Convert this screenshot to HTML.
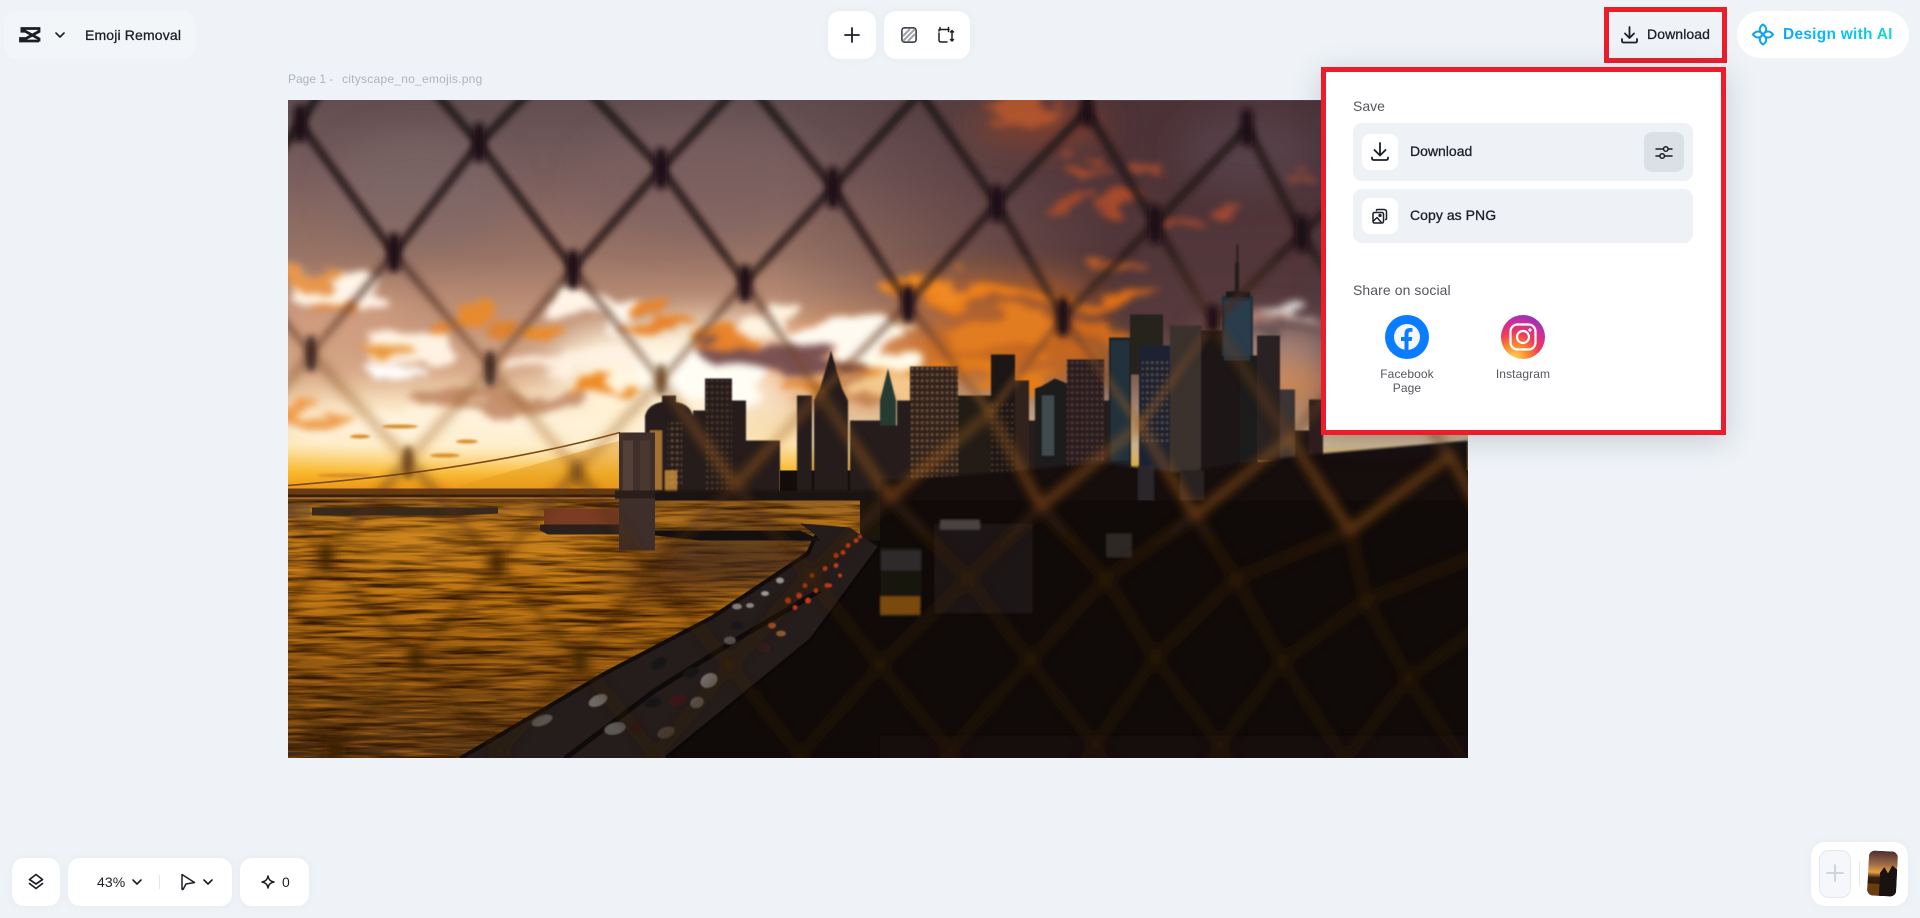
<!DOCTYPE html>
<html><head><meta charset="utf-8"><title>Emoji Removal</title>
<style>
html,body{margin:0;padding:0;width:1920px;height:918px;overflow:hidden;background:#eff3f7;font-family:"Liberation Sans",sans-serif;color:#1c1f26}
.a{position:absolute}
.card{position:absolute;background:#fff;border-radius:12px;box-shadow:0 0 8px rgba(120,135,150,.08)}
.t{position:absolute;white-space:nowrap;font-size:14px;line-height:18px}
.m{-webkit-text-stroke:.3px currentColor}
svg{display:block;overflow:visible}
.ic{position:absolute;fill:none;stroke:#1c1f26;stroke-width:1.6;stroke-linecap:round;stroke-linejoin:round}
</style></head><body>

<svg class="a" style="left:288px;top:99.500px;overflow:hidden" width="1180" height="658.500" viewBox="288 99.500 1180 658.500">
<defs>
<linearGradient id="sky" gradientUnits="userSpaceOnUse" x1="0" y1="100" x2="0" y2="495">
<stop offset="0" stop-color="#614e50"/><stop offset=".2" stop-color="#7b5f5e"/><stop offset=".4" stop-color="#9b7566"/><stop offset=".52" stop-color="#bd8f76"/><stop offset=".68" stop-color="#d6a888"/><stop offset=".78" stop-color="#f3d3aa"/><stop offset=".87" stop-color="#fde6b4"/><stop offset=".94" stop-color="#f9b92e"/><stop offset="1" stop-color="#e88c10"/>
</linearGradient>
<linearGradient id="dk" gradientUnits="userSpaceOnUse" x1="780" y1="0" x2="1110" y2="0">
<stop offset="0" stop-color="#46292e" stop-opacity="0"/><stop offset="1" stop-color="#4a3035" stop-opacity=".9"/>
</linearGradient>
<linearGradient id="dkv" gradientUnits="userSpaceOnUse" x1="0" y1="100" x2="0" y2="470">
<stop offset="0" stop-color="#fff"/><stop offset=".6" stop-color="#fff"/><stop offset="1" stop-color="#fff" stop-opacity=".15"/>
</linearGradient>
<mask id="dkm"><rect x="288" y="100" width="1180" height="400" fill="url(#dkv)"/></mask>
<linearGradient id="wat" gradientUnits="userSpaceOnUse" x1="0" y1="498" x2="0" y2="758">
<stop offset="0" stop-color="#8a5c24"/><stop offset=".1" stop-color="#c07c1c"/><stop offset=".4" stop-color="#b87212"/><stop offset=".68" stop-color="#8c5410"/><stop offset="1" stop-color="#4c2e14"/>
</linearGradient>
<linearGradient id="fgt" gradientUnits="userSpaceOnUse" x1="0" y1="100" x2="0" y2="400">
<stop offset="0" stop-color="#20161a" stop-opacity=".86"/><stop offset=".5" stop-color="#2a1c1c" stop-opacity=".8"/><stop offset=".75" stop-color="#4e2e22" stop-opacity=".62"/><stop offset="1" stop-color="#7a4a26" stop-opacity=".45"/>
</linearGradient>
<linearGradient id="fgm" gradientUnits="userSpaceOnUse" x1="0" y1="250" x2="0" y2="500">
<stop offset="0" stop-color="#3a2420" stop-opacity=".72"/><stop offset=".4" stop-color="#6e4228" stop-opacity=".5"/><stop offset=".75" stop-color="#b06a20" stop-opacity=".45"/><stop offset="1" stop-color="#a85c10" stop-opacity=".55"/>
</linearGradient>
<linearGradient id="fgl" gradientUnits="userSpaceOnUse" x1="0" y1="440" x2="0" y2="760">
<stop offset="0" stop-color="#6a3c14" stop-opacity=".55"/><stop offset=".4" stop-color="#42220c" stop-opacity=".45"/><stop offset="1" stop-color="#34200f" stop-opacity=".38"/>
</linearGradient>
<filter id="b1" x="-20%" y="-20%" width="140%" height="140%"><feGaussianBlur stdDeviation="1"/></filter>
<filter id="bs" filterUnits="userSpaceOnUse" x="200" y="0" width="1400" height="900"><feGaussianBlur stdDeviation=".7"/></filter>
<filter id="b2" filterUnits="userSpaceOnUse" x="200" y="0" width="1400" height="900"><feGaussianBlur stdDeviation="2.600"/></filter>
<filter id="b3" filterUnits="userSpaceOnUse" x="200" y="0" width="1400" height="900"><feGaussianBlur stdDeviation="3.500"/></filter>
<filter id="b5" filterUnits="userSpaceOnUse" x="200" y="0" width="1400" height="900"><feGaussianBlur stdDeviation="5"/></filter>
<filter id="b16" filterUnits="userSpaceOnUse" x="200" y="0" width="1400" height="900"><feGaussianBlur stdDeviation="16"/></filter>
<filter id="cl" filterUnits="userSpaceOnUse" x="200" y="0" width="1400" height="900" color-interpolation-filters="sRGB">
<feTurbulence type="fractalNoise" baseFrequency=".014 .035" numOctaves="4" seed="11" result="n"/>
<feDisplacementMap in="SourceGraphic" in2="n" scale="55" xChannelSelector="R" yChannelSelector="G"/>
<feGaussianBlur stdDeviation="3.600"/>
</filter>
<filter id="wd" filterUnits="userSpaceOnUse" x="288" y="495" width="600" height="265" color-interpolation-filters="sRGB">
<feTurbulence type="fractalNoise" baseFrequency=".014 .22" numOctaves="3" seed="7"/>
<feColorMatrix values="0 0 0 0 .2  0 0 0 0 .09  0 0 0 0 0  2.600 0 0 0 -1"/>
</filter>
<filter id="wl" filterUnits="userSpaceOnUse" x="288" y="495" width="600" height="265" color-interpolation-filters="sRGB">
<feTurbulence type="fractalNoise" baseFrequency=".018 .28" numOctaves="3" seed="21"/>
<feColorMatrix values="0 0 0 0 .95  0 0 0 0 .58  0 0 0 0 .12  3 0 0 0 -1.400"/>
</filter>
<pattern id="win" width="5" height="6" patternUnits="userSpaceOnUse"><rect x="1" y="1" width="2.400" height="2.400" fill="#d9a468" opacity=".45"/></pattern>
<clipPath id="wc"><path d="M288,498H860V540L808,553L712,617L605,673L460,758H288Z"/></clipPath>
</defs>

<rect x="288" y="99" width="1180" height="401" fill="url(#sky)"/>
<rect x="288" y="99" width="1180" height="401" fill="url(#dk)" mask="url(#dkm)"/>
<g filter="url(#b16)">
<ellipse cx="420" cy="190" rx="90" ry="60" fill="#7c6a6a" opacity=".5"/>
<ellipse cx="700" cy="180" rx="120" ry="60" fill="#7d6060" opacity=".5"/>
<ellipse cx="1250" cy="150" rx="70" ry="40" fill="#5a4a52" opacity=".6"/>
<ellipse cx="1040" cy="125" rx="70" ry="20" fill="#92452a" opacity=".7"/>
<ellipse cx="700" cy="365" rx="150" ry="45" fill="#fff6e0"/>
<ellipse cx="500" cy="425" rx="230" ry="28" fill="#fff4dc" opacity=".9"/>
<ellipse cx="860" cy="360" rx="110" ry="40" fill="#e89048" opacity=".7"/>
<ellipse cx="1010" cy="350" rx="110" ry="32" fill="#d06a18" opacity=".9"/>
<ellipse cx="1000" cy="295" rx="100" ry="18" fill="#c8641c" opacity=".7"/>
<ellipse cx="1270" cy="345" rx="70" ry="24" fill="#a88880" opacity=".85"/>
<ellipse cx="1280" cy="385" rx="60" ry="22" fill="#d28a55" opacity=".95"/>
<ellipse cx="340" cy="320" rx="70" ry="28" fill="#d8a184" opacity=".6"/>
</g>
<g filter="url(#cl)">
<ellipse cx="330" cy="285" rx="50" ry="12" fill="#fff4e8" transform="rotate(14 330 285)"/>
<ellipse cx="300" cy="275" rx="40" ry="6" fill="#e8964a"/>
<ellipse cx="405" cy="345" rx="44" ry="20" fill="#fff2e2"/>
<ellipse cx="400" cy="372" rx="28" ry="6" fill="#fff"/>
<ellipse cx="385" cy="352" rx="24" ry="7" fill="#e99a3e"/>
<ellipse cx="585" cy="305" rx="30" ry="15" fill="#fff4e6" transform="rotate(24 585 305)"/>
<ellipse cx="622" cy="322" rx="26" ry="10" fill="#fff8ee"/>
<ellipse cx="772" cy="316" rx="24" ry="10" fill="#fff3e0"/>
<ellipse cx="835" cy="335" rx="54" ry="18" fill="#fffaf0"/>
<ellipse cx="600" cy="362" rx="100" ry="11" fill="#fff2e2" opacity=".9"/>
<ellipse cx="700" cy="375" rx="60" ry="28" fill="#fffdf4"/>
<ellipse cx="420" cy="424" rx="140" ry="9" fill="#fff2dc"/>
<ellipse cx="320" cy="412" rx="44" ry="8" fill="#ee9c4c"/>
<ellipse cx="500" cy="398" rx="100" ry="11" fill="#bd8260" opacity=".85"/>
<ellipse cx="450" cy="330" rx="12" ry="7" fill="#e9852c"/>
<ellipse cx="337" cy="302" rx="18" ry="6" fill="#e4812a"/>
<ellipse cx="475" cy="320" rx="20" ry="7" fill="#e78a2f"/>
<ellipse cx="510" cy="330" rx="14" ry="8" fill="#dd8230"/>
<ellipse cx="550" cy="335" rx="24" ry="7" fill="#ec8a24"/>
<ellipse cx="600" cy="388" rx="34" ry="5" fill="#ec8a24"/>
<ellipse cx="660" cy="320" rx="40" ry="7" fill="#e8832a"/>
<ellipse cx="725" cy="338" rx="28" ry="14" fill="#e8832a" transform="rotate(-20 725 338)"/>
<ellipse cx="775" cy="358" rx="75" ry="14" fill="#7b5152" transform="rotate(6 775 358)"/>
<ellipse cx="862" cy="365" rx="24" ry="8" fill="#5e3a36"/>
<ellipse cx="868" cy="385" rx="24" ry="20" fill="#c58452"/>
<ellipse cx="820" cy="395" rx="30" ry="7" fill="#dd7f24"/>
<ellipse cx="645" cy="412" rx="44" ry="12" fill="#fff0d0"/>
<ellipse cx="985" cy="292" rx="84" ry="9" fill="#ec7f18"/>
<ellipse cx="925" cy="288" rx="44" ry="7" fill="#f08a24"/>
<ellipse cx="1095" cy="298" rx="70" ry="7" fill="#dd6e18"/>
<ellipse cx="1000" cy="333" rx="56" ry="15" fill="#e27c20"/>
<ellipse cx="1100" cy="332" rx="42" ry="11" fill="#d06a1c"/>
<ellipse cx="960" cy="370" rx="100" ry="12" fill="#e57d18"/>
<g opacity=".8">
<ellipse cx="1130" cy="268" rx="26" ry="5" fill="#de6b24"/>
<ellipse cx="1102" cy="260" rx="11" ry="4" fill="#e06a20"/>
<ellipse cx="1181" cy="221" rx="22" ry="6" fill="#c8502a"/>
<ellipse cx="1090" cy="170" rx="24" ry="5" fill="#cc5528"/>
<ellipse cx="1150" cy="165" rx="26" ry="6" fill="#b8502e" transform="rotate(-14 1150 165)"/>
<ellipse cx="1075" cy="197" rx="24" ry="6" fill="#bb4e28"/>
<ellipse cx="1120" cy="205" rx="18" ry="7" fill="#bd5028"/>
<ellipse cx="1225" cy="207" rx="12" ry="5" fill="#bb5030"/>
<ellipse cx="1295" cy="178" rx="22" ry="4" fill="#a85038"/>
<ellipse cx="1020" cy="108" rx="44" ry="8" fill="#c05a2c"/>
</g>
<ellipse cx="1265" cy="320" rx="55" ry="8" fill="#a67a70"/>
<ellipse cx="1290" cy="313" rx="22" ry="3" fill="#d8d2d2"/>
<ellipse cx="1285" cy="328" rx="38" ry="6" fill="#6a5656"/>
<ellipse cx="895" cy="352" rx="28" ry="15" fill="#fffbe8"/>
<ellipse cx="892" cy="385" rx="38" ry="12" fill="#f4c88c"/>
</g>
<g fill="#d98e2c" filter="url(#b1)">
<ellipse cx="360" cy="436" rx="10" ry="2"/><ellipse cx="400" cy="426" rx="18" ry="2"/><ellipse cx="467" cy="441" rx="11" ry="2"/><ellipse cx="445" cy="455" rx="15" ry="2"/><ellipse cx="345" cy="475" rx="28" ry="2"/>
</g>

<!-- base under skyline -->
<rect x="780" y="470" width="700" height="300" fill="#120c0a"/>

<!-- skyline -->
<g filter="url(#bs)">
<g fill="#251b1a">
<path d="M645,415q4,-14 24,-14t24,14V500H645Z"/><rect x="662" y="395" width="14" height="10"/>
<rect x="705" y="378" width="27" height="122"/><rect x="693" y="410" width="12" height="90"/><rect x="732" y="400" width="14" height="100"/>
<path d="M746,440H780V500H746Z"/>
<path d="M797,395h15V500H797Z"/><path d="M814,400l6,-12 6,-20 5,-18 5,18 6,20 6,12V500H814Z"/>
<path d="M850,420h30V500H850Z"/>
<path d="M880,400l8,-32 8,32V500H880Z" fill="#263a32"/>
<path d="M880,425h17V500H880Z"/>
<rect x="910" y="366" width="48" height="130" fill="#30241f"/>
<rect x="897" y="400" width="14" height="96"/>
<rect x="958" y="395" width="33" height="100" fill="#241a18"/>
<rect x="991" y="354" width="24" height="140" fill="#1c1616"/>
<rect x="1015" y="380" width="14" height="100" fill="#33201f"/>
<rect x="1029" y="420" width="8" height="60"/>
<path d="M1035,388l6,-2 14,-8 12,5V480H1035Z" fill="#1a1a1e"/>
<rect x="1067" y="359" width="37" height="120" fill="#2b1f21"/>
<rect x="1104" y="400" width="10" height="80"/>
<rect x="1109" y="337" width="22" height="130" fill="#1c2128"/>
<rect x="1130" y="314" width="33" height="60" fill="#26201f"/>
<rect x="1139" y="345" width="31" height="150" fill="#1c2430"/>
<rect x="1170" y="325" width="32" height="150" fill="#3a302f"/>
<rect x="1201" y="330" width="40" height="150" fill="#1e1717"/>
<rect x="1222" y="295" width="31" height="60" fill="#22303c"/>
<rect x="1240" y="355" width="18" height="120" fill="#1b1a1c"/>
<rect x="1236.500" y="244" width="1.800" height="52" fill="#2a1f20"/><rect x="1235" y="262" width="4" height="32" fill="#221a1a"/>
<rect x="1226" y="291" width="24" height="6" fill="#1a1414"/>
<rect x="1257" y="335" width="23" height="125" fill="#2a2022"/>
<rect x="1280" y="389" width="15" height="85" fill="#3c3434"/>
<rect x="1295" y="430" width="14" height="40" fill="#1d1616"/>
<rect x="1309" y="399" width="14" height="70" fill="#2e1e1c"/>
</g>
<rect x="910" y="366" width="48" height="125" fill="url(#win)" opacity=".8"/>
<rect x="1067" y="359" width="37" height="110" fill="url(#win)" opacity=".45"/>
<rect x="1142" y="360" width="26" height="85" fill="url(#win)" opacity=".7"/>
<rect x="991" y="400" width="24" height="85" fill="url(#win)" opacity=".45"/>
<rect x="705" y="380" width="27" height="110" fill="url(#win)" opacity=".45"/>
<rect x="1224" y="300" width="26" height="60" fill="#2d4454" opacity=".7"/>
<rect x="1111" y="340" width="18" height="120" fill="#33505f" opacity=".4"/>
<rect x="1042" y="395" width="12" height="60" fill="#8aa0a8" opacity=".35"/>
<rect x="650" y="430" width="12" height="60" fill="#e8a040" opacity=".65"/>
<rect x="668" y="422" width="14" height="62" fill="url(#win)" opacity=".8"/>
<rect x="665" y="470" width="12" height="30" fill="#e6a240" opacity=".7"/>
</g>

<!-- middle + lower city -->
<g filter="url(#b1)">
<rect x="655" y="490" width="815" height="50" fill="#1a1211"/>
<path d="M880,480L1000,472 1100,462 1180,472 1300,455 1468,440V560H880Z" fill="#161010"/>
<rect x="1180" y="470" width="24" height="30" fill="#2b2220"/>
<rect x="1138" y="465" width="16" height="70" fill="#2f2a2c" opacity=".9"/>
</g>

<!-- water -->
<path d="M288,498H860V540L808,553L712,617L605,673L460,758H288Z" fill="url(#wat)"/>
<g clip-path="url(#wc)">
<rect x="288" y="495" width="600" height="265" filter="url(#wd)"/>
<rect x="288" y="520" width="600" height="235" filter="url(#wl)" opacity=".4"/>
<ellipse cx="740" cy="555" rx="90" ry="35" fill="#43291f" opacity=".75" filter="url(#b16)"/>
<ellipse cx="660" cy="580" rx="55" ry="26" fill="#3f2418" opacity=".45" filter="url(#b16)"/>
<ellipse cx="460" cy="540" rx="130" ry="18" fill="#d88e24" opacity=".45" filter="url(#b16)"/>
</g>

<!-- shoreline, road -->
<path d="M460,758L605,673 712,617 808,553 816,535 800,523 850,527 880,548 812,640 667,758Z" fill="#241d1b"/>
<path d="M460,758L605,673 712,617 808,553 816,535" fill="none" stroke="#120d0c" stroke-width="4"/>
<path d="M565,758L655,690 735,640 820,590" fill="none" stroke="#0f0b0a" stroke-width="5"/>
<path d="M667,758L812,640 880,548" fill="none" stroke="#0c0807" stroke-width="6"/>
<path d="M655,530H800L822,540 700,540 655,535Z" fill="#151010"/>

<!-- dark lower-right -->
<path d="M667,758L812,640 880,548 880,500H1468V758Z" fill="#100b09"/>
<g filter="url(#b1)">
<rect x="934" y="523" width="99" height="90" fill="#1f1917"/>
<rect x="940" y="519" width="40" height="10" fill="#4a4240"/>
<rect x="880" y="547" width="42" height="70" fill="#171311"/>
<rect x="881" y="550" width="40" height="20" fill="#2e2b29"/>
<rect x="880" y="596" width="40" height="18" fill="#7a4a10"/>
<rect x="1106" y="533" width="26" height="24" fill="#3f3b39" opacity=".6"/>
<path d="M880,735H1468V758H880Z" fill="#160d0b"/>
</g>

<!-- bridge -->
<path d="M288,485Q480,470 620,432" fill="none" stroke="#7a4a14" stroke-width="1.600"/>
<path d="M460,485L620,440V490H460Z" fill="#e39a1c" opacity=".5"/>
<rect x="288" y="488" width="335" height="6" fill="#6b3c14"/>
<rect x="288" y="494" width="335" height="3" fill="#33200f"/>
<rect x="288" y="498" width="560" height="2" fill="#6c4420"/>
<path d="M312,507h186v6l-40,2H312Z" fill="#39291b"/><rect x="288" y="503" width="22" height="14" fill="#79582e" opacity=".6"/>
<rect x="544" y="508" width="75" height="16" fill="#7a3c22"/>
<path d="M540,524H622V534H548L540,530Z" fill="#2a201c"/>
<rect x="619" y="432" width="36" height="118" fill="#3e2f2a"/>
<rect x="623" y="440" width="10" height="52" fill="#544038"/><rect x="640" y="440" width="10" height="52" fill="#4a3830"/>
<rect x="615" y="490" width="44" height="8" fill="#2a1e1a"/>
<rect x="655" y="492" width="225" height="8" fill="#1a1312"/>

<!-- cars -->
<g filter="url(#bs)">
<ellipse cx="659" cy="663" rx="8" ry="5" fill="#141214" transform="rotate(-25 659 663)"/>
<ellipse cx="598" cy="700" rx="10" ry="5.500" fill="#706a66" transform="rotate(-25 598 700)"/>
<ellipse cx="542" cy="720" rx="11" ry="5" fill="#5c5450" transform="rotate(-20 542 720)"/>
<ellipse cx="653" cy="702" rx="9" ry="5" fill="#191417" transform="rotate(-14 653 702)"/>
<ellipse cx="678" cy="700" rx="9" ry="5.500" fill="#3a1416" transform="rotate(-14 678 700)"/>
<ellipse cx="697" cy="702" rx="7" ry="5.500" fill="#5e5652" transform="rotate(-25 697 702)"/>
<ellipse cx="691" cy="672" rx="8" ry="5" fill="#141215" transform="rotate(-20 691 672)"/>
<ellipse cx="709" cy="680" rx="9" ry="7" fill="#726e6c" transform="rotate(-30 709 680)"/>
<ellipse cx="615" cy="728" rx="11" ry="6" fill="#5c5856" transform="rotate(-14 615 728)"/>
<ellipse cx="636" cy="728" rx="7" ry="5.500" fill="#2c1416" transform="rotate(-20 636 728)"/>
<ellipse cx="666" cy="732" rx="9" ry="5.500" fill="#4c3e38" transform="rotate(-20 666 732)"/>
<ellipse cx="726" cy="663" rx="6" ry="4" fill="#2c1c18"/>
<ellipse cx="764" cy="647" rx="7" ry="5" fill="#301e1a"/>
<ellipse cx="737" cy="625" rx="6" ry="4" fill="#18151a"/>
<ellipse cx="737" cy="606" rx="5" ry="3" fill="#a8a4a0" opacity=".7"/>
<ellipse cx="781" cy="633" rx="5" ry="3" fill="#8a5a30"/>
<ellipse cx="772" cy="625" rx="4" ry="3" fill="#b05030"/>
<ellipse cx="730" cy="640" rx="6" ry="4" fill="#706a66" opacity=".7"/>
<ellipse cx="780" cy="580" rx="4" ry="3" fill="#c8c4c0" opacity=".7"/>
<ellipse cx="765" cy="593" rx="4" ry="2.500" fill="#d0ccc8" opacity=".7"/>
<ellipse cx="750" cy="605" rx="4" ry="2.500" fill="#d0ccc8" opacity=".6"/>
<g fill="#c83c1c">
<circle cx="795" cy="607" r="2.500"/><circle cx="788" cy="600" r="3"/><circle cx="799" cy="595" r="3"/><circle cx="808" cy="600" r="3"/><circle cx="816" cy="590" r="2.500"/><circle cx="805" cy="585" r="2.500"/><circle cx="827" cy="585" r="2.500"/><circle cx="812" cy="575" r="2.500"/><circle cx="825" cy="568" r="2.500"/><circle cx="836" cy="565" r="2.500"/><circle cx="830" cy="585" r="2"/><circle cx="840" cy="575" r="2"/>
<circle cx="836" cy="555" r="2.500"/><circle cx="843" cy="552" r="2.500"/><circle cx="848" cy="545" r="2.500"/><circle cx="856" cy="540" r="2.500"/><circle cx="860" cy="536" r="2"/>
</g>
</g>

<!-- fence -->
<g fill="none" stroke="url(#fgt)" stroke-width="9" stroke-linejoin="round" filter="url(#b2)">
<path d="M300,123L330,75M479,143L425,80 M479,143L560,60L661,168L745,78L833,187L920,92L997,203L1087,110L1155,223L1247,127L1302,233L1400,140"/>
<path d="M218,240L300,123L394,253L479,143L573,268L661,168L745,282L833,187L908,303L997,203L1063,317L1155,223L1213,322L1302,233L1370,345L1470,262"/>
</g>
<g fill="none" stroke="url(#fgm)" stroke-width="8" stroke-linejoin="round" filter="url(#b3)">
<path d="M218,240L311,353L394,253L490,367L573,268L661,380L745,282L820,393L908,303L990,412L1063,317L1140,425L1213,322"/>
</g>
<g fill="none" stroke="url(#fgl)" stroke-width="9" stroke-linejoin="round" filter="url(#b5)">
<path d="M1213,322L1290,438L1370,345L1450,455"/>
<path d="M237,445L311,353L408,460L490,367L577,470L661,380L735,485L820,393L890,497L990,412L1041,506L1140,425L1195,515L1290,438L1350,530L1450,455L1500,545" stroke="url(#fgm)"/>
<path d="M237,445L326,557L408,460L497,563L577,470L650,570L735,485L810,575L890,497L968,578L1041,506L1106,578L1195,515L1236,578L1350,530L1366,600L1500,545"/>
<path d="M250,650L326,557L416,657L497,563L580,660L650,570L730,665L810,575L880,665L968,578L1030,660L1106,578L1155,657L1236,578L1282,661L1366,600L1408,678L1490,620"/>
<path d="M250,650L335,750L416,657L500,750L580,660L655,755L730,665L800,755L880,665L950,750L1030,660L1095,745L1155,657L1220,745L1282,661L1345,760L1408,678L1470,770"/>
<path d="M255,850L335,750L415,850L500,750L580,850L655,755L730,850L800,755L880,850L950,750L1020,850L1095,745L1160,850L1220,745L1280,850L1345,760L1410,850L1470,770"/>
</g>
<g fill="none" stroke-linecap="round" filter="url(#b3)">
<path stroke="#1a1012" stroke-width="12" d="M479,128v28M661,153v30M833,172v30M997,190v26M1087,98v22M1155,210v28M1247,114v26M1302,220v26M300,110v26M394,238v28M573,255v28M745,270v26M908,290v26M1063,302v28M1213,310v16"/>
<path stroke="#2a1a14" stroke-width="10" d="M311,340v26M490,355v26" opacity=".85"/>
<path stroke="#5a3214" stroke-width="9" d="M661,368v22M408,450v24" opacity=".8"/>
</g>
<g fill="none" stroke-linecap="round" filter="url(#b5)">
<path stroke="#3c1e08" stroke-width="11" d="M326,545v24M497,552v22M416,648v20M580,650v20M335,740v16" opacity=".8"/>
<path stroke="#4a2814" stroke-width="9" d="M577,462v20" opacity=".6"/>
</g>
</svg>

<!-- left header -->
<div class="a" style="left:4px;top:11px;width:191px;height:48px;background:#f3f6f9;border-radius:12px"></div>
<svg class="a" style="left:19px;top:26px" width="22" height="18" viewBox="0 0 22 18"><path d="M1.500,2.500H20V5.500L7,12.500H1.500V15H20M1.500,5.200H6L20,12.800V15.500" fill="none" stroke="#1c1f26" stroke-width="2.800"/></svg>
<svg class="ic" style="left:54px;top:30px" width="12" height="10" viewBox="0 0 12 10"><path d="M2,3l4,4 4,-4"/></svg>
<div class="t m" style="left:85px;top:26px;font-size:14px;letter-spacing:.15px">Emoji Removal</div>
<div class="t" style="left:288px;top:70px;font-size:12px;color:#aeb4bd">Page 1 -</div>
<div class="t" style="left:342px;top:70px;font-size:12px;color:#aeb4bd;letter-spacing:.25px">cityscape_no_emojis.png</div>

<!-- center toolbar -->
<div class="card" style="left:828px;top:11px;width:48px;height:48px"></div>
<svg class="ic" style="left:844px;top:27px;stroke-width:1.800" width="16" height="16" viewBox="0 0 16 16"><path d="M8,1V15M1,8H15"/></svg>
<div class="card" style="left:884px;top:11px;width:86px;height:48px"></div>
<svg class="a" style="left:901px;top:27px" width="16" height="16" viewBox="0 0 16 16"><rect x=".9" y=".9" width="14.200" height="14.200" rx="2.500" fill="#fff" stroke="#2c2f36" stroke-width="1.500"/><path d="M2,9L9,2M2,14L14,2M7,14L14,7" stroke="#9ea2a9" stroke-width="2"/></svg>
<svg class="ic" style="left:938px;top:27px;stroke-width:1.500" width="17" height="16" viewBox="0 0 17 16"><path d="M1,6V13q0,2 2,2H9M1,4V3q0,-.5 .5,-.5H11M2,.5V3M10.500,.5V4.500M14,4V13M12.500,5L14,3.500L15.500,5M12.500,12.500L14,14L15.500,12.500"/></svg>

<!-- top download -->
<div class="a" style="left:1604px;top:7px;width:113px;height:46px;border:5px solid #ed1c2b;background:#eff3f7"></div>
<svg class="ic" style="left:1621px;top:26px;stroke-width:1.800" width="17" height="18" viewBox="0 0 17 18"><path d="M8.500,1V11.500M4,7.500L8.500,12L13,7.500M1,13V15q0,1.500 1.500,1.500H14.500q1.500,0 1.500,-1.500V13"/></svg>
<div class="t m" style="left:1647px;top:25px;font-size:14px;letter-spacing:.1px">Download</div>

<!-- AI button -->
<div class="a" style="left:1737px;top:11px;width:172px;height:47px;background:#fff;border-radius:24px"></div>
<svg class="a" style="left:1752px;top:23px" width="22" height="23" viewBox="0 0 22 23"><g fill="none" stroke="#0ca5ee" stroke-width="2"><path d="M11,1.500C15,4 15.500,8 11,11.500C6.500,8 7,4 11,1.500Z"/><path d="M11,21.500C15,19 15.500,15 11,11.500C6.500,15 7,19 11,21.500Z"/><path d="M1,11.500C4,7.500 8,7.500 11,11.500C8,15.500 4,15.500 1,11.500Z"/><path d="M21,11.500C18,7.500 14,7.500 11,11.500C14,15.500 18,15.500 21,11.500Z"/></g></svg>
<div class="t" style="left:1783px;top:25px;font-size:15.500px;line-height:20px;font-weight:700;letter-spacing:.25px;background:linear-gradient(90deg,#0aa6ff,#08c4f0 60%,#12dcc4);-webkit-background-clip:text;background-clip:text;color:transparent">Design with AI</div>

<!-- panel -->
<div class="a" style="left:1321px;top:67px;width:395px;height:358px;border:5px solid #ed1c2b;background:#fff;box-shadow:0 6px 28px rgba(50,70,90,.22)"></div>
<div class="t" style="left:1353px;top:97px;color:#54575e;font-size:14px">Save</div>
<div class="a" style="left:1353px;top:123px;width:340px;height:58px;background:#eef1f5;border-radius:9px"></div>
<div class="a" style="left:1362px;top:134px;width:36px;height:36px;background:#fff;border-radius:8px"></div>
<svg class="ic" style="left:1371px;top:142px;stroke-width:1.800" width="18" height="20" viewBox="0 0 18 20"><path d="M9,1V13M3.500,8L9,13.500L14.500,8M1,15.500V16q0,2 2,2H15q2,0 2,-2V15.500"/></svg>
<div class="t m" style="left:1410px;top:142px">Download</div>
<div class="a" style="left:1644px;top:132px;width:40px;height:40px;background:#dbe0e7;border-radius:8px"></div>
<svg class="ic" style="left:1655px;top:143px;stroke-width:1.500" width="18" height="18" viewBox="0 0 18 18"><path d="M1,6H8.500M13,6H17M1,13H5M9.500,13H17"/><circle cx="10.800" cy="6" r="2.300"/><circle cx="7.200" cy="13" r="2.300"/></svg>
<div class="a" style="left:1353px;top:189px;width:340px;height:54px;background:#eef1f5;border-radius:9px"></div>
<div class="a" style="left:1362px;top:198px;width:36px;height:36px;background:#fff;border-radius:8px"></div>
<svg class="ic" style="left:1372px;top:208px;stroke-width:1.500" width="16" height="16" viewBox="0 0 16 16"><rect x="1" y="4.500" width="10.500" height="10.500" rx="1.500"/><path d="M4.500,2.500q0,-1 1,-1H12q2.500,0 2.500,2.500V10.500q0,1 -1,1M1.500,13L5,9.500L9,14"/><circle cx="8" cy="7.500" r=".9"/></svg>
<div class="t m" style="left:1410px;top:206px;letter-spacing:.05px">Copy as PNG</div>
<div class="t" style="left:1353px;top:281px;color:#54575e;font-size:14px;letter-spacing:.08px">Share on social</div>

<svg class="a" style="left:1385px;top:315px" width="44" height="44" viewBox="0 0 44 44"><circle cx="22" cy="22" r="22" fill="#0a7cff"/><circle cx="22" cy="22" r="13" fill="#f4f6f8"/><path d="M19.500,35.500V26H16V22H19.500V18.500C19.500,15 21.500,13 24.800,13C26.300,13 27.500,13.200 27.500,13.200V16.800H25.800C24,16.800 23.500,17.800 23.500,19V22H27.300L26.700,26H23.500V35.500Z" fill="#0a7cff"/></svg>
<div class="t" style="left:1357px;top:367px;width:100px;text-align:center;font-size:12px;line-height:14px;color:#54575e;white-space:normal;letter-spacing:.1px">Facebook<br>Page</div>
<svg class="a" style="left:1501px;top:315px" width="44" height="44" viewBox="0 0 44 44"><defs><radialGradient id="ig" cx=".3" cy="1" r="1.150"><stop offset="0" stop-color="#ffd85a"/><stop offset=".28" stop-color="#fb8a2e"/><stop offset=".52" stop-color="#ee3a58"/><stop offset=".75" stop-color="#c72f9e"/><stop offset="1" stop-color="#6f35d0"/></radialGradient></defs><circle cx="22" cy="22" r="22" fill="url(#ig)"/><rect x="9.500" y="9.500" width="25" height="25" rx="7" fill="none" stroke="#fff" stroke-width="2.200"/><circle cx="22" cy="22" r="6" fill="none" stroke="#fff" stroke-width="2.200"/><circle cx="29" cy="15" r="1.600" fill="#fff"/></svg>
<div class="t" style="left:1473px;top:367px;width:100px;text-align:center;font-size:12px;line-height:14px;color:#54575e;letter-spacing:.1px">Instagram</div>

<!-- bottom left -->
<div class="card" style="left:12px;top:858px;width:48px;height:48px"></div>
<svg class="ic" style="left:28px;top:873px;stroke-width:1.700" width="16" height="18" viewBox="0 0 16 18"><path d="M8,1.500L14.500,6.500L8,11L1.500,6.500Z"/><path d="M1.500,10.500L8,15.500L14.500,10.500"/></svg>
<div class="card" style="left:68px;top:858px;width:164px;height:48px"></div>
<div class="t" style="left:97px;top:873px;font-size:14px;letter-spacing:.1px">43%</div>
<svg class="ic" style="left:131px;top:877px" width="12" height="10" viewBox="0 0 12 10"><path d="M2,3l4,4 4,-4"/></svg>
<div class="a" style="left:159px;top:875px;width:1px;height:14px;background:#e2e5e9"></div>
<svg class="ic" style="left:180px;top:873px;stroke-width:1.500" width="16" height="18" viewBox="0 0 16 18"><path d="M2,1.500L14.500,9.500L6,11L3,16.500Q2,17 2,15.500Z"/></svg>
<svg class="ic" style="left:202px;top:877px" width="12" height="10" viewBox="0 0 12 10"><path d="M2,3l4,4 4,-4"/></svg>
<div class="card" style="left:240px;top:858px;width:69px;height:48px"></div>
<svg class="ic" style="left:261px;top:875px;stroke-width:1.500" width="14" height="14" viewBox="0 0 14 14"><path d="M7,1C7.500,4.500 9.500,6.500 13,7C9.500,7.500 7.500,9.500 7,13C6.500,9.500 4.500,7.500 1,7C4.500,6.500 6.500,4.500 7,1Z"/></svg>
<div class="t" style="left:282px;top:873px;font-size:14px">0</div>

<!-- bottom right -->
<div class="card" style="left:1811px;top:842px;width:97px;height:64px;border-radius:14px"></div>
<div class="a" style="left:1819px;top:850px;width:30px;height:46px;background:#f5f7fa;border:1px solid #e4e8ee;border-radius:10px"></div>
<svg class="ic" style="left:1826px;top:864px;stroke:#ccd1d8;stroke-width:1.800" width="18" height="18" viewBox="0 0 18 18"><path d="M9,1V17M1,9H17"/></svg>
<div class="a" style="left:1859px;top:862px;width:1px;height:24px;background:#e4e7eb"></div>
<svg class="a" style="left:1868px;top:851px;overflow:hidden;border-radius:6px;transform:rotate(3deg)" width="29" height="45" viewBox="0 0 29 45"><defs><linearGradient id="th" x1="0" y1="0" x2="0" y2="1"><stop offset="0" stop-color="#4a3030"/><stop offset=".3" stop-color="#a06a48"/><stop offset=".48" stop-color="#e8a040"/><stop offset=".6" stop-color="#3a2014"/><stop offset="1" stop-color="#100a08"/></linearGradient></defs><rect width="29" height="45" fill="url(#th)"/><path d="M12,45V22L16,16 20,22 24,14 29,18V45Z" fill="#1a1210"/><path d="M0,33H12V45H0Z" fill="#6a3c10"/></svg>
</body></html>
